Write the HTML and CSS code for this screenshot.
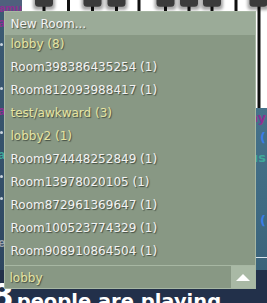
FILE: index.html
```html
<!DOCTYPE html>
<html>
<head>
<meta charset="utf-8">
<title>Rooms</title>
<link rel="stylesheet" href="styles.css">
</head>
<body>
<div class="app">
  <div class="top">
    <aside class="sidebar">
      <div class="sb-head">amu</div>
      <div class="sb-row"><b class="pu">a</b></div>
      <div class="sb-row"><i class="dot"></i></div>
      <div class="sb-row"></div>
      <div class="sb-row"><i class="dot"></i></div>
      <div class="sb-row"><b class="pu">a</b></div>
      <div class="sb-row"><i class="dot"></i></div>
      <div class="sb-row"><b class="te">a</b></div>
      <div class="sb-row"><i class="dot"></i></div>
      <div class="sb-row"><i class="dot"></i></div>
      <div class="sb-row"></div>
      <div class="sb-row"><b class="gr">e</b></div>
    </aside>
    <main class="main">
      <svg class="piano" width="245" height="108" viewBox="0 0 245 108">
        <defs>
          <filter id="soft" x="-50%" y="-50%" width="200%" height="200%">
            <feGaussianBlur stdDeviation="1.8"/>
          </filter>
        </defs>
        <rect width="245" height="108" fill="#ffffff"/>
        <rect x="45" y="0" width="3" height="108" fill="#111"/>
        <rect x="115.5" y="0" width="3" height="108" fill="#111"/>
        <rect x="212.5" y="0" width="3" height="108" fill="#111"/>
        <g fill="#111">
          <rect x="20.5" y="0" width="3" height="108"/>
          <rect x="69" y="0" width="3" height="108"/>
          <rect x="93" y="0" width="3" height="108"/>
          <rect x="142" y="0" width="3" height="108"/>
          <rect x="165.5" y="0" width="3" height="108"/>
          <rect x="188.5" y="0" width="3" height="108"/>
          <rect x="235.5" y="0" width="3" height="108"/>
        </g>
        <g fill="#000" opacity="0.35" filter="url(#soft)">
          <rect x="11" y="-6" width="22" height="16" rx="4"/>
          <rect x="59.5" y="-6" width="22" height="16" rx="4"/>
          <rect x="83.5" y="-6" width="22" height="16" rx="4"/>
          <rect x="132.5" y="-6" width="22" height="16" rx="4"/>
          <rect x="156" y="-6" width="22" height="16" rx="4"/>
          <rect x="179" y="-6" width="22" height="16" rx="4"/>
          <rect x="225.5" y="-6" width="22" height="16" rx="4"/>
        </g>
        <g fill="#3b3b3b">
          <rect x="13" y="-6" width="18" height="12.7" rx="3.5"/>
          <rect x="61.5" y="-6" width="18" height="12.7" rx="3.5"/>
          <rect x="85.5" y="-6" width="18" height="12.7" rx="3.5"/>
          <rect x="134.5" y="-6" width="18" height="12.7" rx="3.5"/>
          <rect x="158" y="-6" width="18" height="12.7" rx="3.5"/>
          <rect x="181" y="-6" width="18" height="12.7" rx="3.5"/>
          <rect x="227.5" y="-6" width="18" height="12.7" rx="3.5"/>
        </g>
      </svg>
      <section class="chat">
        <div class="chat-line pu">Play</div>
        <div class="chat-line bl">(</div>
        <div class="chat-line te">Status</div>
        <div class="chat-line bl lower">(</div>
        <div class="chat-input"></div>
      </section>
    </main>
  </div>
  <footer class="footer">
    <h2 class="players"><span class="count">8</span>people are playing</h2>
  </footer>
</div>

<div class="dropdown">
  <div class="dd-head">New Room...</div>
  <ul class="dd-list">
    <li class="hl">lobby (8)</li>
    <li>Room398386435254 (1)</li>
    <li>Room812093988417 (1)</li>
    <li class="hl">test/awkward (3)</li>
    <li class="hl">lobby2 (1)</li>
    <li>Room974448252849 (1)</li>
    <li>Room13978020105 (1)</li>
    <li>Room872961369647 (1)</li>
    <li>Room100523774329 (1)</li>
    <li>Room908910864504 (1)</li>
  </ul>
  <div class="dd-select">
    <span class="dd-value">lobby</span>
    <span class="dd-btn">
      <svg width="14" height="7" viewBox="0 0 14 7"><polygon points="0,7 7,0 14,7" fill="#ffffff"/></svg>
    </span>
  </div>
</div>
</body>
</html>
```

FILE: styles.css
```css
html, body {
  margin: 0;
  padding: 0;
  background: #22304a;
}

body {
  width: 267px;
  height: 303px;
  overflow: hidden;
  position: relative;
  font-family: "DejaVu Sans", Verdana, sans-serif;
}

.app {
  display: flex;
  flex-direction: column;
  height: 303px;
}

.top {
  display: flex;
  height: 270px;
  flex: none;
}

/* left user strip */
.sidebar {
  width: 22px;
  flex: none;
  overflow: hidden;
  background: linear-gradient(#3c5b74, #35526b 55%, #2e4660);
  font-family: "Liberation Sans", Arial, sans-serif;
  font-size: 11px;
  font-weight: bold;
}

.sb-head {
  height: 11px;
  box-sizing: border-box;
  padding-top: 1px;
  line-height: 14px;
  background: #4f607d;
  color: #8e2f92;
  white-space: nowrap;
  margin-left: -1px;
}

.sb-row {
  height: 22px;
  display: flex;
  align-items: center;
  padding-left: 0;
}

.sb-row b {
  margin-left: -2px;
  font-size: 13px;
}

.pu { color: #8e2f92; }
.te { color: #3fa89a; }
.gr { color: #9aa3ad; }
.bl { color: #3a7de6; }

.dot {
  display: block;
  width: 3px;
  height: 3px;
  border-radius: 50%;
  background: #c9d4de;
  margin-left: 0;
}

/* main column */
.main {
  flex: 1;
  display: flex;
  flex-direction: column;
  min-width: 0;
}

.piano {
  display: block;
  flex: none;
}

.chat {
  flex: 1;
  background: linear-gradient(#46728a, #3f6a82 60%, #3a6279);
  padding-top: 2px;
  display: flex;
  flex-direction: column;
  font-size: 13px;
  font-weight: bold;
  font-family: "DejaVu Sans", Verdana, sans-serif;
}

.chat-line {
  text-align: right;
  line-height: 16px;
  height: 20px;
  padding-right: 1px;
}

.chat-line.lower {
  margin-top: 43px;
}

.chat-input {
  margin-top: 24px;
  height: 17px;
  border-top: 1px solid #d7e2ea;
  border-bottom: 1px solid #b9cad6;
}

/* footer */
.footer {
  flex: 1;
  background: #22304a;
  overflow: hidden;
}

.players {
  margin: 0;
  padding-top: 9.2px;
  line-height: 1;
  font-size: 19.5px;
  font-weight: bold;
  color: #ffffff;
  white-space: nowrap;
  font-family: "DejaVu Sans", Verdana, sans-serif;
}

.count {
  font-size: 34px;
  margin-left: -10px;
  margin-right: 3px;
}

/* room dropdown (overlay menu) */
.dropdown {
  position: absolute;
  left: 4px;
  top: 11px;
  width: 250px;
  border: 1px solid #a7b7a3;
  background: #889884;
  font-family: "DejaVu Sans", Verdana, sans-serif;
  font-size: 12px;
  line-height: 14px;
  color: #f3f3f3;
  text-shadow: 1px 1px 1px rgba(30, 38, 30, 0.65);
}

.dd-head {
  height: 23px;
  box-sizing: border-box;
  padding: 5px 0 0 5.5px;
  background: #9bab98;
}

.dd-list {
  list-style: none;
  margin: 0;
  padding: 0;
}

.dd-list li {
  height: 23px;
  box-sizing: border-box;
  padding: 2px 0 0 5.5px;
  white-space: nowrap;
}

.dd-list li.hl,
.dd-value {
  color: #e7e5a2;
}

.dd-select {
  display: flex;
  height: 22px;
  border-top: 1px solid #a7b7a3;
}

.dd-value {
  flex: 1;
  padding: 4.5px 0 0 4.5px;
}

.dd-btn {
  width: 24px;
  flex: none;
  background: #a9b9a5;
  display: flex;
  align-items: center;
  justify-content: center;
}

.dd-btn svg {
  display: block;
}
```
